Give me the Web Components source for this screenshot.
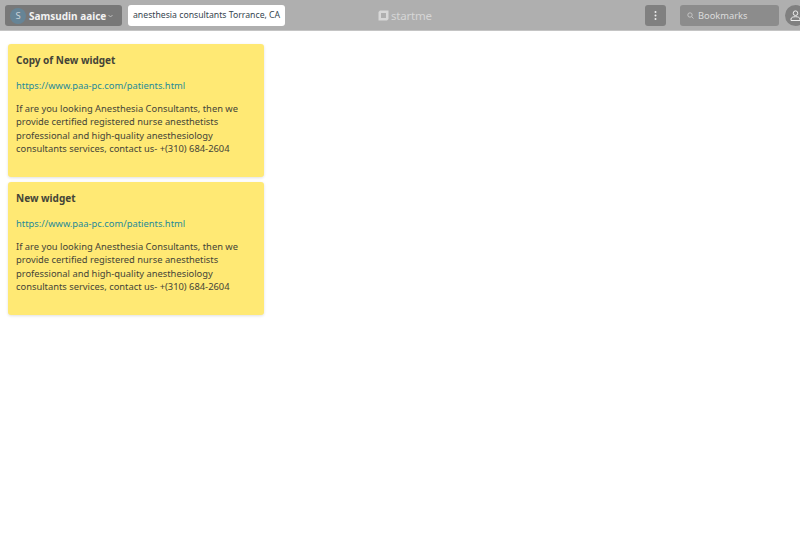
<!DOCTYPE html>
<html>
<head>
<meta charset="utf-8">
<title>start.me</title>
<style>
	html, body { margin: 0; padding: 0; height: 100%; background: #fff; }
	body { font-family: "Noto Sans", sans-serif; overflow: hidden; }
</style>
</head>
<body>
<top-bar></top-bar>
<widget-column>
	<note-widget title="Copy of New widget" link="https://www.paa-pc.com/patients.html">If are you looking Anesthesia Consultants, then we provide certified registered nurse anesthetists professional and high-quality anesthesiology consultants services, contact us- +(310) 684-2604</note-widget>
	<note-widget title="New widget" link="https://www.paa-pc.com/patients.html">If are you looking Anesthesia Consultants, then we provide certified registered nurse anesthetists professional and high-quality anesthesiology consultants services, contact us- +(310) 684-2604</note-widget>
</widget-column>

<script>
class TopBar extends HTMLElement {
	constructor(){
		super();
		this.shadowDom = this.attachShadow({mode: 'open'});
		this.shadowDom.innerHTML = `
			<style>
				:host {
					display: flex;
					align-items: center;
					box-sizing: border-box;
					height: 31px;
					padding: 1px 0 0 5px;
					background: #afafaf;
					border-bottom: 1px solid #c4c4c4;
					overflow: hidden;
				}
				.user {
					flex: none;
					display: flex;
					align-items: center;
					box-sizing: border-box;
					width: 117px;
					height: 21px;
					padding-left: 5px;
					background: #787878;
					border-radius: 3px;
					color: #f2f2f2;
					font-size: 10px;
					font-weight: 700;
					white-space: nowrap;
				}
				.letter {
					width: 16px;
					height: 16px;
					margin-right: 3px;
					border-radius: 50%;
					background: #668496;
					color: #c9d3d9;
					font-size: 9.5px;
					font-weight: 400;
					line-height: 16px;
					text-align: center;
				}
				.user svg { margin-left: 2px; }
				.query {
					flex: none;
					box-sizing: border-box;
					width: 157px;
					height: 21px;
					margin-left: 6px;
					padding-left: 5px;
					background: #fff;
					border-radius: 3px;
					color: #36454f;
					font-size: 8.7px;
					line-height: 21px;
					white-space: nowrap;
				}
				.logo {
					flex: none;
					display: flex;
					align-items: center;
					gap: 2px;
					margin-left: 93px;
					width: 56px;
					color: #d6d6d6;
					font-size: 11.5px;
					letter-spacing: -0.2px;
				}
				.menu {
					flex: none;
					display: flex;
					align-items: center;
					justify-content: center;
					width: 21px;
					height: 21px;
					margin-left: 211px;
					background: #808080;
					border-radius: 3px;
				}
				.search {
					flex: none;
					display: flex;
					align-items: center;
					box-sizing: border-box;
					width: 99px;
					height: 21px;
					margin-left: 14px;
					padding-left: 7px;
					background: #8c8c8c;
					border-radius: 3px;
					color: #dcdcdc;
					font-size: 9.3px;
				}
				.search svg { margin-right: 4px; }
				.avatar {
					flex: none;
					display: flex;
					align-items: center;
					justify-content: center;
					width: 21px;
					height: 21px;
					margin-left: 6px;
					border-radius: 50%;
					background: #808080;
				}
			</style>
			<div class="user">
				<div class="letter">S</div>
				<span>Samsudin aaice</span>
				<svg width="5" height="4" viewBox="0 0 5 4"><path d="M.5 1l2 2 2-2" fill="none" stroke="#d8d8d8" stroke-width=".7"/></svg>
			</div>
			<div class="query">anesthesia consultants Torrance, CA</div>
			<div class="logo">
				<svg width="11" height="11" viewBox="0 0 11 11" style="flex:none"><path d="M2 .5h8.500V9L9 10.500H.5V2z M3 3v5h5V3z" fill="#d8d8d8" fill-rule="evenodd"/></svg>
				<span>startme</span>
			</div>
			<div class="menu">
				<svg width="3" height="9" viewBox="0 0 3 9"><g fill="#eee"><circle cx="1.500" cy="1" r="1"/><circle cx="1.500" cy="4.500" r="1"/><circle cx="1.500" cy="8" r="1"/></g></svg>
			</div>
			<div class="search">
				<svg width="7" height="7" viewBox="0 0 7 7"><circle cx="3" cy="3" r="2.200" fill="none" stroke="#d0d0d0" stroke-width=".8"/><path d="M4.700 4.700L6.500 6.500" stroke="#d0d0d0" stroke-width=".8"/></svg>
				<span>Bookmarks</span>
			</div>
			<div class="avatar">
				<svg width="11" height="11" viewBox="0 0 11 11"><circle cx="5.500" cy="3.200" r="2.300" fill="none" stroke="#eee" stroke-width="1"/><path d="M1 10.500V9c0-1.500 2-2.300 4.500-2.300S10 7.500 10 9v1.500z" fill="none" stroke="#eee" stroke-width="1"/></svg>
			</div>
		`;
	}
}

class WidgetColumn extends HTMLElement {
	constructor(){
		super();
		this.shadowDom = this.attachShadow({mode: 'open'});
		this.shadowDom.innerHTML = `
			<style>
				:host {
					display: flex;
					flex-direction: column;
					gap: 5px;
					width: 256px;
					margin: 13px 0 0 8px;
				}
			</style>
			<slot></slot>
		`;
	}
}

class NoteWidget extends HTMLElement {
	constructor(){
		super();
		this.shadowDom = this.attachShadow({mode: 'open'});
	}

	connectedCallback(){
		this.render();
	}

	render() {
		this.shadowDom.innerHTML = `
			<style>
				:host {
					display: block;
					box-sizing: border-box;
					height: 133px;
					padding: 9px 8px 0;
					background: #ffe974;
					border-radius: 3px;
					box-shadow: 0 1px 3px rgba(0, 0, 0, .12);
					color: #444438;
					font-size: 9.35px;
					line-height: 13.3px;
				}
				h3 {
					margin: 0;
					font-size: 10px;
					font-weight: 700;
					line-height: 15px;
				}
				a {
					display: block;
					margin: 10px 0 9px;
					color: #1f8a99;
					line-height: 15px;
					text-decoration: none;
				}
				p { margin: 0; }
			</style>
			<h3>${this.getAttribute('title')}</h3>
			<a href="#">${this.getAttribute('link')}</a>
			<p><slot></slot></p>
		`;
	}
}

customElements.define('top-bar', TopBar);
customElements.define('widget-column', WidgetColumn);
customElements.define('note-widget', NoteWidget);
</script>
</body>
</html>
